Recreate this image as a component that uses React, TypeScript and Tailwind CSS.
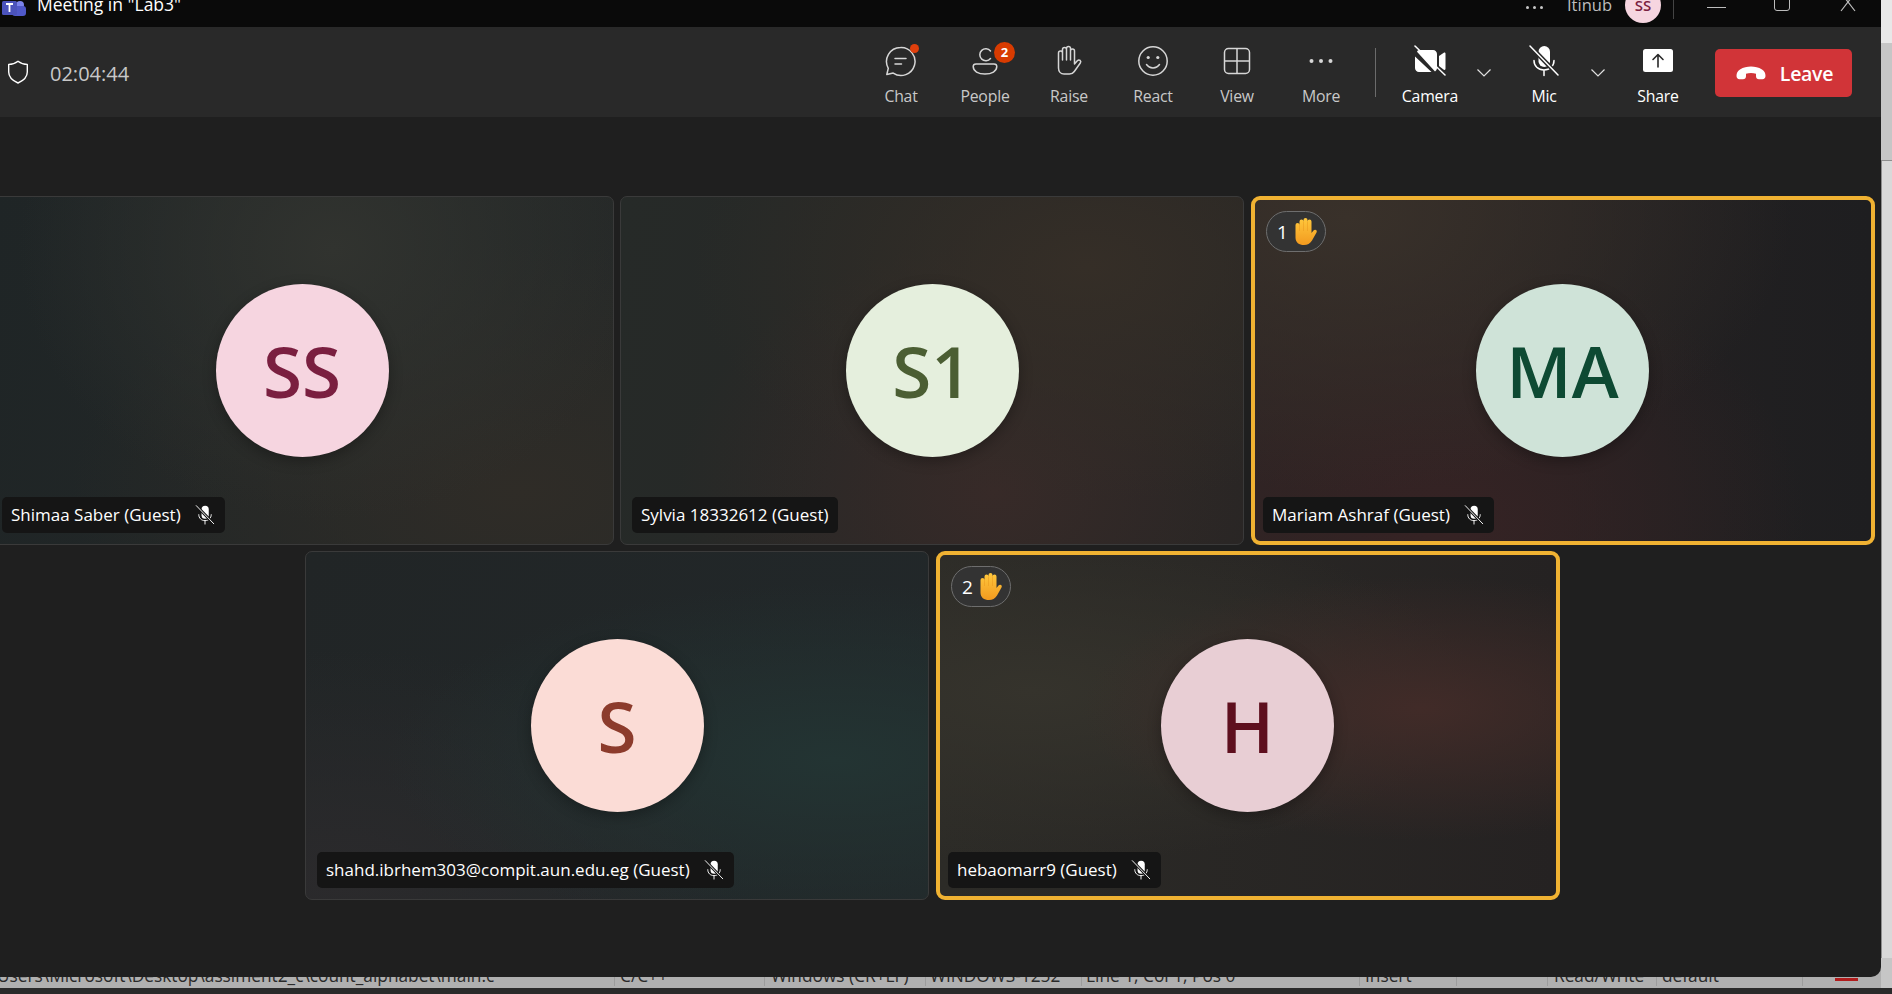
import React from "react";

const font = { fontFamily: '"Open Sans", "Noto Sans", sans-serif' };

function Chat() {
  return (
    <svg width="32" height="32" viewBox="0 0 32 32" fill="none" stroke="#d6d6d6" strokeWidth="1.5" strokeLinecap="round" strokeLinejoin="round" className="-ml-[1px]">
      <path d="M16.5 2.5a14 14 0 0 0-12.2 20.800L2.800 29.500l6.400-1.400A14 14 0 1 0 16.500 2.500Z" />
      <path d="M11 13.500h11M11 19h6.500" />
    </svg>
  );
}
function People() {
  return (
    <svg width="32" height="32" viewBox="0 0 32 32" fill="none" stroke="#d6d6d6" strokeWidth="1.500" strokeLinecap="round">
      <path d="M21.500 6a6 6 0 1 0 0 7.500" />
      <path d="M7 19h18c1.600 0 2.800 1.200 2.800 2.600 0 4.600-5 7.400-11.800 7.400S4.200 26.200 4.200 21.600C4.200 20.200 5.400 19 7 19Z" />
    </svg>
  );
}
function Raise() {
  return (
    <svg width="32" height="32" viewBox="0 0 32 32" fill="none" stroke="#d6d6d6" strokeWidth="1.500" strokeLinecap="round" strokeLinejoin="round">
      <path d="M5.500 18V8a2 2 0 0 1 4 0v7V4.500a2 2 0 0 1 4 0V15V3.500a2 2 0 0 1 4 0V15V6a2 2 0 0 1 4 0v13l2.800-3.200c2-2 4.400.2 3 2.200l-6 8.500c-1.200 1.700-2.800 2.500-4.800 2.500H11c-3.300 0-5.500-2.500-5.500-6Z" />
    </svg>
  );
}
function React_() {
  return (
    <svg width="32" height="32" viewBox="0 0 32 32" fill="none" stroke="#d6d6d6" strokeWidth="1.500" strokeLinecap="round">
      <circle cx="16" cy="16" r="14.200" />
      <path d="M9.500 19.500c3.200 4.500 9.800 4.500 13 0" />
      <circle cx="11.200" cy="12.500" r="1.600" fill="#d6d6d6" stroke="none" />
      <circle cx="20.800" cy="12.500" r="1.600" fill="#d6d6d6" stroke="none" />
    </svg>
  );
}
function ViewIcon() {
  return (
    <svg width="32" height="32" viewBox="0 0 32 32" fill="none" stroke="#d6d6d6" strokeWidth="1.500">
      <rect x="3.500" y="3.500" width="25" height="25" rx="4" />
      <path d="M16 3.500v25M3.500 16h25" />
    </svg>
  );
}
function More() {
  return (
    <svg width="32" height="32" viewBox="0 0 32 32" fill="#d6d6d6">
      <circle cx="6.500" cy="16" r="2" />
      <circle cx="16" cy="16" r="2" />
      <circle cx="25.500" cy="16" r="2" />
    </svg>
  );
}
function Camera() {
  return (
    <svg width="32" height="32" viewBox="0 0 32 32" fill="none">
      <path d="M5 5h14c2.400 0 4 1.800 4 4v14c0 1.500-.8 2.800-2 3.400L3 6.800C3.500 5.700 4 5 5 5ZM1 11.500 17.500 27H5c-2.300 0-4-1.700-4-4Z" fill="#fff" />
      <path d="m25 11 4.800-3.300c.8-.5 1.700 0 1.700 1v15c0 1-.9 1.500-1.700 1L25 21Z" fill="#fff" />
      <path d="M1 1 31 30" stroke="#fff" strokeWidth="1.500" strokeLinecap="round" />
    </svg>
  );
}
function MicOff({ size = 32, bg = "#292929" }: { size?: number; bg?: string }) {
  return (
    <svg width={size} height={size} viewBox="0 0 32 32" fill="none">
      <rect x="10.500" y="1" width="11.500" height="21" rx="5.750" fill="#fff" />
      <path d="M6 15.500C6 21 10 25 16 25s10-4 10-9.500M16 25v5.500" stroke="#fff" strokeWidth="1.500" strokeLinecap="round" />
      <path d="M2 1 30 30" stroke={bg} strokeWidth="4.500" />
      <path d="M2 1 30 30" stroke="#fff" strokeWidth="1.500" strokeLinecap="round" />
    </svg>
  );
}
function Share() {
  return (
    <svg width="32" height="32" viewBox="0 0 32 32" fill="none">
      <rect x="1" y="4" width="30" height="23" rx="2.500" fill="#fff" />
      <path d="M16 22V10M11 14.500 16 9.500l5 5" stroke="#292929" strokeWidth="1.600" strokeLinecap="round" strokeLinejoin="round" />
    </svg>
  );
}
function Chevron() {
  return (
    <svg width="16" height="10" viewBox="0 0 16 10" fill="none" stroke="#e0e0e0" strokeWidth="1.200">
      <path d="M1.500 1.500 8 8l6.500-6.500" />
    </svg>
  );
}
function Phone() {
  return (
    <svg width="30" height="14" viewBox="0 0 30 14" fill="#fff">
      <path d="M0.500 10c0-3 1-5 3.500-6.500C7.500 1.200 11 .5 15 .5s7.500.7 11 3C28.500 5 29.500 7 29.500 10c0 2-1.200 3.200-3 3.200H23c-1.800 0-3-1.200-3-3V7.800c-3-1.200-7-1.200-10 0v2.400c0 1.800-1.200 3-3 3H3.500c-1.800 0-3-1.200-3-3.200Z" />
    </svg>
  );
}
function Hand() {
  return (
    <svg width="24" height="28" viewBox="0 0 24 28">
      <defs>
        <linearGradient id="handGrad" x1="0" y1="0" x2="0" y2="1">
          <stop offset="0" stopColor="#ffc83d" />
          <stop offset="1" stopColor="#f29a1f" />
        </linearGradient>
      </defs>
      <path d="M1.500 13V7a2 2 0 0 1 4 0V3.500a2 2 0 0 1 4 0V2a2 2 0 0 1 4 0v1.500a2 2 0 0 1 4 0V15l2-2.500c1.700-1.800 4.200-.1 3 1.900l-4.500 8C16 25.500 13.500 27 10 27c-5 0-8.500-2.500-8.500-7.500Z" fill="url(#handGrad)" />
      <path d="M5.500 7v6M9.500 3.500V13M13.500 3.500V13" stroke="#e8961c" strokeWidth="0.500" fill="none" />
    </svg>
  );
}

function Tool({ label, children, active }: { label: string; children: React.ReactNode; active?: boolean }) {
  return (
    <div className="w-[84px] h-[90px] flex flex-col items-center pt-[18px]">
      <div className="relative w-[32px] h-[32px]">{children}</div>
      <span className={`mt-[8px] text-[15.800px] leading-[22px] tracking-[-0.2px] ${active ? "text-white" : "text-[#c8c8c8]"}`}>{label}</span>
    </div>
  );
}

function Tile({
  name,
  initials,
  bg,
  fg,
  gradient,
  hand,
  muted = true,
  extra = "",
}: {
  name: string;
  initials: string;
  bg: string;
  fg: string;
  gradient: string;
  hand?: string;
  muted?: boolean;
  extra?: string;
}) {
  return (
    <div
      className={`relative h-[349px] w-[624px] shrink-0 flex items-center justify-center ${extra} ${gradient} ${
        hand ? "rounded-[9px] border-[4px] border-[#f0b232]" : "rounded-[7px] border border-[#3a3a3a]"
      }`}
    >
      {hand && (
        <div className="absolute left-[11px] top-[11px] h-[41px] w-[60px] rounded-full border border-[#6e6e6e] bg-[#333333] flex items-center pl-[10px] gap-[6px]">
          <span className="text-white text-[19px] leading-none font-medium mt-[2px]">{hand}</span>
          <Hand />
        </div>
      )}
      <div className={`w-[173px] h-[173px] rounded-full flex items-center justify-center ${bg} shadow-[0_4px_14px_rgba(0,0,0,0.3)] ${hand ? "-ml-[1px]" : ""}`}>
        <span className={`text-[71px] leading-none font-semibold ${fg}`}>{initials}</span>
      </div>
      <div className={`absolute h-[36px] rounded-[5px] bg-[#151515] flex items-center pl-[9px] pr-[10px] gap-[14px] ${hand ? "left-[8px] bottom-[8px]" : "left-[11px] bottom-[11px]"}`}>
        <span className="text-white text-[17px] leading-none -mt-[1px] whitespace-nowrap">{name}</span>
        {muted && <MicOff size={20} bg="#151515" />}
      </div>
    </div>
  );
}

const statusItems: [string, string][] = [
  ["w-[615px]", "Users\\Microsoft\\Desktop\\assiment2_c\\count_alphabet\\main.c"],
  ["w-[150px] pl-[5px]", "C/C++"],
  ["w-[161px] pl-[6px]", "Windows (CR+LF)"],
  ["w-[156px] pl-[4px]", "WINDOWS-1252"],
  ["w-[278px] pl-[4px]", "Line 1, Col 1, Pos 0"],
  ["w-[97px] pl-[5px]", "Insert"],
  ["w-[91px]", ""],
  ["w-[109px] pl-[6px]", "Read/Write"],
  ["w-[146px] pl-[5px]", "default"],
];

export default function App() {
  return (
    <div style={font} className="relative w-[1892px] h-[994px] overflow-hidden bg-[#b4b4b4]">
      <div className="flex h-[977px]">
        {/* Teams window */}
        <div className="relative z-10 w-[1881px] h-[977px] shrink-0 flex flex-col rounded-br-[10px] overflow-hidden bg-[#1f1f1f]">
          {/* Title bar */}
          <div className="h-[27px] shrink-0 bg-[#0a0a0a] flex items-start overflow-hidden">
            <div className="flex items-center gap-[12px] -mt-[10px] pl-[2px] h-[30px]">
              <div className="relative w-[24px] h-[24px]">
                <svg width="24" height="24" viewBox="0 0 24 24">
                  <circle cx="18" cy="12" r="4" fill="#7b83eb" />
                  <rect x="10" y="13" width="14" height="10" rx="3" fill="#5059c9" />
                  <rect x="0" y="8" width="15" height="14" rx="1.500" fill="#4b53bc" />
                  <path d="M4 11h7M7.500 11v8" stroke="#fff" strokeWidth="1.800" />
                </svg>
              </div>
              <span className="text-white text-[17.500px] leading-none -ml-[1px]">Meeting in "Lab3"</span>
            </div>
            <div className="ml-auto flex items-start -mt-[13px] h-[36px]">
              <div className="flex items-center gap-[4px] h-[36px] mt-[2px] mr-[24px]">
                <span className="w-[3px] h-[3px] rounded-full bg-[#c8c8c8]" />
                <span className="w-[3px] h-[3px] rounded-full bg-[#c8c8c8]" />
                <span className="w-[3px] h-[3px] rounded-full bg-[#c8c8c8]" />
              </div>
              <span className="text-[#bdbdbd] text-[16.500px] leading-[36px] mr-[13px]">Itinub</span>
              <div className="w-[36px] h-[36px] rounded-full bg-[#f6d5e0] flex items-center justify-center">
                <span className="text-[#7a1f40] text-[15px] font-semibold">SS</span>
              </div>
              <div className="w-px h-[32px] bg-[#444444] ml-[12px] mr-[33px]" />
              <div className="w-[19px] h-[19px] border-b border-[#bdbdbd] mt-[2px] mr-[48px]" />
              <div className="w-[16px] h-[24px] border border-[#bdbdbd] rounded-[3px] mr-[49px]" />
              <svg width="18" height="26" viewBox="0 0 18 26" fill="none" stroke="#bdbdbd" strokeWidth="1.200" className="mr-[24px]">
                <path d="M2 6 16 24M16 6 2 24" />
              </svg>
            </div>
          </div>

          {/* Toolbar */}
          <div className="h-[90px] shrink-0 bg-[#292929] flex items-start">
            <div className="flex items-center h-[92px] pl-[7px] gap-[21px]">
              <svg width="22" height="24" viewBox="0 0 22 24" fill="none" stroke="#ffffff" strokeWidth="1.400" strokeLinejoin="round" className="-mt-[2px]">
                <path d="M11 1.200c2.600 2 6 3.200 9.300 3.200V12c0 5-3.600 8.500-9.300 11C5.300 20.500 1.700 17 1.700 12V4.400C5 4.400 8.400 3.200 11 1.200Z" />
              </svg>
              <span className="text-[#c8c8c8] text-[20px] leading-none mt-[1px]">02:04:44</span>
            </div>
            <div className="ml-auto flex items-start pr-[29px]">
              <Tool label="Chat">
                <Chat />
                <span className="absolute -right-[2px] -top-[1px] w-[9px] h-[9px] rounded-full bg-[#e03f0c]" />
              </Tool>
              <Tool label="People">
                <People />
                <span className="absolute -right-[14px] -top-[3px] w-[21px] h-[21px] rounded-full bg-[#d83b01] flex items-center justify-center text-white text-[13px] font-bold leading-none">2</span>
              </Tool>
              <Tool label="Raise"><Raise /></Tool>
              <Tool label="React"><React_ /></Tool>
              <Tool label="View"><ViewIcon /></Tool>
              <Tool label="More"><More /></Tool>
              <div className="w-px h-[49px] bg-[#6b6b6b] mt-[21px] mx-[12px]" />
              <Tool label="Camera" active><Camera /></Tool>
              <div className="w-[24px] h-[90px] flex justify-center pt-[41px]"><Chevron /></div>
              <div className="w-[6px]" />
              <Tool label="Mic" active><MicOff /></Tool>
              <div className="w-[24px] h-[90px] flex justify-center pt-[41px]"><Chevron /></div>
              <div className="w-[6px]" />
              <Tool label="Share" active><Share /></Tool>
              <div className="ml-[15px] mt-[22px] w-[137px] h-[48px] rounded-[5px] bg-[#d13438] flex items-center justify-center gap-[14px] pl-[2px]">
                <Phone />
                <span className="text-white text-[19.500px] font-semibold leading-none tracking-[-0.3px] mt-[2px]">Leave</span>
              </div>
            </div>
          </div>

          {/* Stage */}
          <div className="flex-1 flex flex-col pt-[79px] gap-[6px]">
            <div className="flex gap-[6px] -ml-[10px]">
              <Tile name="Shimaa Saber (Guest)" initials="SS" bg="bg-[#f6d5e0]" fg="text-[#7a1f40]" gradient="bg-[radial-gradient(ellipse_at_55%_15%,#31332f,transparent_65%),radial-gradient(ellipse_at_85%_85%,#2f2c27,transparent_60%),linear-gradient(100deg,#1f2526,#262928)]" />
              <Tile name="Sylvia 18332612 (Guest)" initials="S1" bg="bg-[#e5efdd]" fg="text-[#4b5e33]" gradient="bg-[radial-gradient(ellipse_at_75%_20%,#352e27,transparent_60%),radial-gradient(ellipse_at_60%_85%,#372a28,transparent_60%),linear-gradient(100deg,#262a28,#262524)]" muted={false} />
              <Tile name="Mariam Ashraf (Guest)" initials="MA" bg="bg-[#cfe3d8]" fg="text-[#0e4a33]" gradient="bg-[radial-gradient(ellipse_at_15%_5%,#39312a,transparent_60%),radial-gradient(ellipse_at_30%_95%,#362324,transparent_60%),linear-gradient(90deg,#2a2424,#1e1e20)]" hand="1" extra="ml-[1px]" />
            </div>
            <div className="flex gap-[7px] ml-[305px]">
              <Tile name="shahd.ibrhem303@compit.aun.edu.eg (Guest)" initials="S" bg="bg-[#fbdcd6]" fg="text-[#8c3b2c]" gradient="bg-[radial-gradient(ellipse_at_85%_60%,#233433,transparent_60%),radial-gradient(ellipse_at_5%_95%,#2b2a2c,transparent_50%),linear-gradient(120deg,#212526,#22282a)]" />
              <Tile name="hebaomarr9 (Guest)" initials="H" bg="bg-[#e8ced4]" fg="text-[#5e0f1e]" gradient="bg-[radial-gradient(ellipse_at_78%_45%,#412b28,transparent_50%),radial-gradient(ellipse_at_15%_40%,#35332c,transparent_60%),linear-gradient(90deg,#2c2b27,#252222)]" hand="2" />
            </div>
          </div>
        </div>

        {/* Desktop window behind, right strip */}
        <div className="flex-1 flex flex-col">
          <div className="h-[43px] bg-[#e8e8e8]" />
          <div className="h-[117px] bg-[#c6c6c6]" />
          <div className="flex-1 bg-[#d9d9d9] border-t border-l border-[#8e8e8e]" />
        </div>
      </div>

      {/* Status bar of the window behind */}
      <div className="relative -mt-[19px] h-[30px] bg-[#b0b0b0] flex items-start overflow-hidden">
        {statusItems.map(([w, t], i) => (
          <div key={i} className={`${w} shrink-0 h-[28px] border-r border-[#9c9c9c] text-[#2a2a2a] text-[17.300px] leading-[22px] pt-[7px] box-border whitespace-nowrap overflow-hidden`}>
            <span className={i === 0 ? "-ml-[3px] inline-block" : ""}>{t}</span>
          </div>
        ))}
        <div className="w-[23px] h-[3px] bg-[#b01c1c] mt-[20px] ml-[32px] shrink-0" />
        <div className="ml-[23px] flex-1 h-[30px] bg-[#c6c6c6]" />
      </div>
      <div className="h-[6px] bg-[#2a2a2a]" />
    </div>
  );
}
